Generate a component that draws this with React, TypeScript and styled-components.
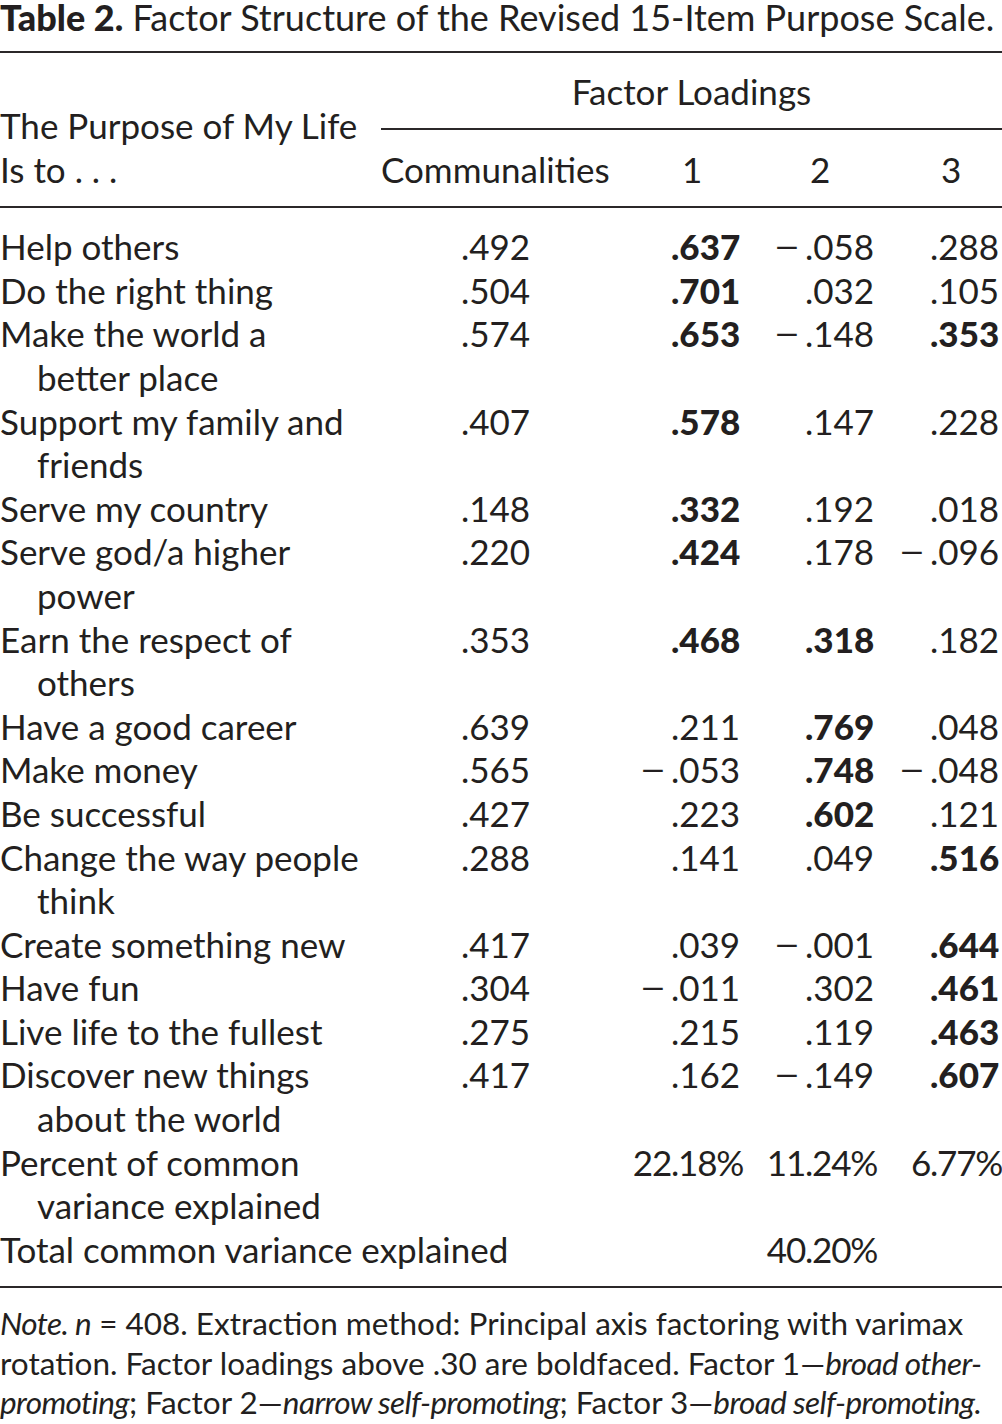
import React from "react";
import styled, { createGlobalStyle } from "styled-components";

const GlobalStyle = createGlobalStyle`
  html, body {
    margin: 0;
    padding: 0;
    background: #ffffff;
  }
  body {
    font-family: Lato, "Open Sans", sans-serif;
    color: #231f20;
  }
`;

const Page = styled.div`
  width: 1002px;
  box-sizing: border-box;
`;

const Caption = styled.div`
  font-size: 36px;
  line-height: 34px;
  white-space: nowrap;
  padding-bottom: 17px;
  border-bottom: 2px solid #2b2829;
`;

const CaptionLabel = styled.span`
  font-weight: 900;
`;

const COLS = "381px 225px 154px 124px 118px";
const ROW_H = "43.6px";

const Header = styled.div`
  display: grid;
  grid-template-columns: ${COLS};
  grid-template-rows: auto auto;
  font-size: 35px;
  line-height: ${ROW_H};
  border-bottom: 2px solid #2b2829;
`;

const StubHead = styled.div`
  grid-column: 1;
  grid-row: 1 / span 2;
  align-self: end;
  padding-bottom: 15px;
  white-space: nowrap;
`;

const Spanner = styled.div`
  grid-column: 2 / span 4;
  grid-row: 1;
  text-align: center;
  padding: 17px 0 14px;
  border-bottom: 2px solid #2b2829;
`;

const ColHead = styled.div<{ $pad: number }>`
  grid-row: 2;
  padding: 18px 0 15px ${(p) => p.$pad}px;
  white-space: nowrap;
`;

const Body = styled.div`
  display: grid;
  grid-template-columns: ${COLS};
  font-size: 35px;
  line-height: ${ROW_H};
  padding: 17px 0 15px;
  border-bottom: 2px solid #2b2829;
`;

const Label = styled.div<{ $span?: number }>`
  grid-column: ${(p) => (p.$span ? `1 / span ${p.$span}` : "auto")};
  padding-left: 37px;
  text-indent: -37px;
  white-space: nowrap;
`;

const Comm = styled.div`
  padding-left: 80px;
`;

const Num = styled.div<{ $pad: number; $bold?: boolean; $tight?: boolean }>`
  display: flex;
  padding-left: ${(p) => p.$pad}px;
  font-weight: ${(p) => (p.$bold ? 900 : 400)};
  letter-spacing: ${(p) => (p.$tight ? "-1.2px" : "0")};
  white-space: nowrap;
`;

const Lead = styled.span`
  display: flex;
  justify-content: flex-end;
  width: 0;
  white-space: nowrap;
`;

const Minus = styled.span`
  padding-right: 4px;
  font-weight: 400;
  display: inline-block;
  transform: scaleX(1.3);
  transform-origin: right center;
`;

const Note = styled.p`
  margin: 0;
  padding-top: 16px;
  font-size: 31.5px;
  line-height: 39.5px;
  white-space: nowrap;

  i {
    letter-spacing: -0.6px;
  }
`;

const PAD = [65, 45, 46];
const HEAD_PAD = [76, 50, 57];

type Row = {
  label: React.ReactNode;
  comm: string;
  vals: [string, string, string];
  bold: [boolean, boolean, boolean];
};

const rows: Row[] = [
  { label: "Help others", comm: ".492", vals: [".637", "−.058", ".288"], bold: [true, false, false] },
  { label: "Do the right thing", comm: ".504", vals: [".701", ".032", ".105"], bold: [true, false, false] },
  { label: <>Make the world a<br />better place</>, comm: ".574", vals: [".653", "−.148", ".353"], bold: [true, false, true] },
  { label: <>Support my family and<br />friends</>, comm: ".407", vals: [".578", ".147", ".228"], bold: [true, false, false] },
  { label: "Serve my country", comm: ".148", vals: [".332", ".192", ".018"], bold: [true, false, false] },
  { label: <>Serve god/a higher<br />power</>, comm: ".220", vals: [".424", ".178", "−.096"], bold: [true, false, false] },
  { label: <>Earn the respect of<br />others</>, comm: ".353", vals: [".468", ".318", ".182"], bold: [true, true, false] },
  { label: "Have a good career", comm: ".639", vals: [".211", ".769", ".048"], bold: [false, true, false] },
  { label: "Make money", comm: ".565", vals: ["−.053", ".748", "−.048"], bold: [false, true, false] },
  { label: "Be successful", comm: ".427", vals: [".223", ".602", ".121"], bold: [false, true, false] },
  { label: <>Change the way people<br />think</>, comm: ".288", vals: [".141", ".049", ".516"], bold: [false, false, true] },
  { label: "Create something new", comm: ".417", vals: [".039", "−.001", ".644"], bold: [false, false, true] },
  { label: "Have fun", comm: ".304", vals: ["−.011", ".302", ".461"], bold: [false, false, true] },
  { label: "Live life to the fullest", comm: ".275", vals: [".215", ".119", ".463"], bold: [false, false, true] },
  { label: <>Discover new things<br />about the world</>, comm: ".417", vals: [".162", "−.149", ".607"], bold: [false, false, true] },
];

// splits "22.18%" into "22" + ".18%" so the decimal point lines up
function NumCell({ value, col, bold }: { value: string; col: number; bold?: boolean }) {
  const i = value.indexOf(".");
  const lead = i >= 0 ? value.slice(0, i) : "";
  const rest = i >= 0 ? value.slice(i) : value;
  return (
    <Num $pad={PAD[col]} $bold={bold} $tight={rest.endsWith("%")}>
      <Lead>{lead === "−" ? <Minus>−</Minus> : lead}</Lead>
      {rest}
    </Num>
  );
}

export default function App() {
  return (
    <Page>
      <GlobalStyle />
      <Caption>
        <CaptionLabel>Table 2.</CaptionLabel> Factor Structure of the Revised 15-Item Purpose Scale.
      </Caption>
      <Header>
        <StubHead>
          The Purpose of My Life
          <br />
          Is to . . .
        </StubHead>
        <Spanner>Factor Loadings</Spanner>
        <ColHead $pad={0}>Communalities</ColHead>
        {["1", "2", "3"].map((h, i) => (
          <ColHead key={h} $pad={HEAD_PAD[i]}>
            {h}
          </ColHead>
        ))}
      </Header>
      <Body>
        {rows.map((r, ri) => (
          <React.Fragment key={ri}>
            <Label>{r.label}</Label>
            <Comm>{r.comm}</Comm>
            {r.vals.map((v, ci) => (
              <NumCell key={ci} value={v} col={ci} bold={r.bold[ci]} />
            ))}
          </React.Fragment>
        ))}
        <Label>
          Percent of common
          <br />
          variance explained
        </Label>
        <Comm />
        <NumCell value="22.18%" col={0} />
        <NumCell value="11.24%" col={1} />
        <NumCell value="6.77%" col={2} />
        <Label $span={2}>Total common variance explained</Label>
        <div />
        <NumCell value="40.20%" col={1} />
        <div />
      </Body>
      <Note>
        <i>Note. n</i> = 408. Extraction method: Principal axis factoring with varimax
        <br />
        rotation. Factor loadings above .30 are boldfaced. Factor 1—<i>broad other-</i>
        <br />
        <i>promoting</i>; Factor 2—<i>narrow self-promoting</i>; Factor 3—<i>broad self-promoting.</i>
      </Note>
    </Page>
  );
}
